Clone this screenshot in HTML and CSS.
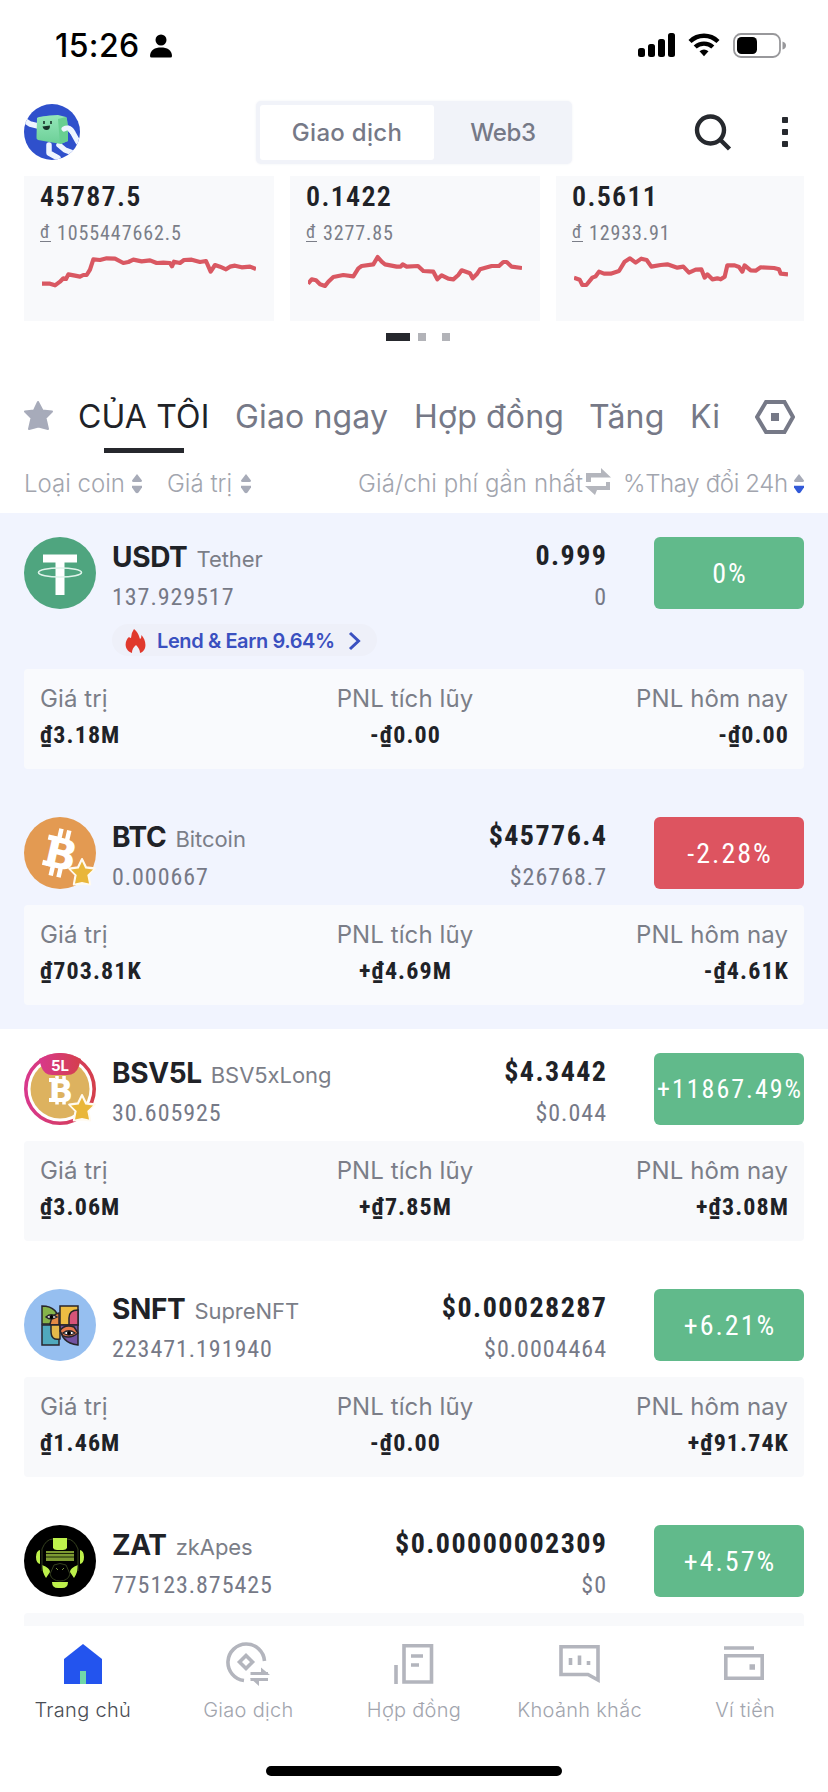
FILE: index.html
```html
<!DOCTYPE html>
<html lang="vi">
<head>
<meta charset="utf-8">
<title>Giao dịch</title>
<link rel="stylesheet" href="styles.css">
</head>
<body>
<svg class="defs" width="0" height="0">
  <defs>
    <symbol id="sort" viewBox="0 0 12 22">
      <path class="sort-up" d="M6 1 11 7.4Q11 9 9.500 9H2.500Q1 9 1 7.400Z"/>
      <path class="sort-down" d="M1 12.800H11V14.500L7.500 19.600Q6 21 4.500 19.600L1 14.500Z"/>
    </symbol>
    <symbol id="fav" viewBox="0 0 28 30">
      <path d="M14 2 18 10.200 26.800 11.300 20.400 17.600 22.200 27.500 14 26.500 5.800 27.500 7.500 18 1.200 11.500 10 10.200Z" fill="#fffaf0" stroke="#fffaf0" stroke-width="2" stroke-linejoin="round"/>
      <path d="M14 4.500 17.300 11.600 25 12.500 19.300 18 21 26.500 14 25 7 26.500 8.700 18 3 12.500 10.700 11.600Z" fill="#e9b63a"/>
    </symbol>
  </defs>
</svg>
<div class="screen">
  <div class="status">
    <span class="time">15:26</span>
    <svg class="person" width="22" height="24" viewBox="0 0 22 24"><circle cx="11" cy="6" r="5.500"/><path d="M0 22C0 16 5 13.500 11 13.500S22 16 22 22Q22 23.500 20.500 23.500H1.500Q0 23.500 0 22Z"/></svg>
    <div class="status-icons">
      <svg width="37" height="24" viewBox="0 0 37 24"><rect x="0" y="15" width="7" height="9" rx="2.500"/><rect x="10" y="11" width="7" height="13" rx="2.500"/><rect x="20" y="6" width="7" height="18" rx="2.500"/><rect x="30" y="0" width="7" height="24" rx="2.500"/></svg>
      <svg class="wifi" width="32" height="24" viewBox="0 0 32 24"><g fill="none" stroke="#000" stroke-width="4.400"><path d="M2 8.500C10 .8 22 .8 30 8.500"/><path d="M7.200 14C12 9.500 20 9.500 24.800 14"/></g><path d="M11.500 18.300Q16 14.800 20.500 18.300L16 23.300Z"/></svg>
      <svg class="battery" width="53" height="25" viewBox="0 0 53 25"><rect x="1" y="1" width="46" height="23" rx="7" fill="none" stroke="#98989b" stroke-width="1.800"/><rect x="4" y="4" width="20" height="17" rx="4.500"/><path d="M49.500 8.500Q53 9.500 53 12.500T49.500 16.500Z" fill="#98989b"/></svg>
    </div>
  </div>

  <div class="topbar">
    <svg class="avatar" width="56" height="56" viewBox="0 0 56 56">
      <defs><clipPath id="av"><circle cx="28" cy="28" r="28"/></clipPath><linearGradient id="cube" x2="0" y2="1"><stop stop-color="#94e7b9"/><stop offset="1" stop-color="#6ccf97"/></linearGradient></defs>
      <g clip-path="url(#av)">
        <rect width="56" height="56" fill="#2f50cc"/>
        <g fill="none" stroke="#eef4ff" stroke-width="5.500" stroke-linecap="round" stroke-linejoin="round"><path d="M0 16 6 20 14 22"/><path d="M39 25Q46 22 49 29L54 38"/><path d="M25 41V49L34 54"/><path d="M35 41 41 46 49 49"/></g>
        <path d="M13 14Q15 12 34 11L42 13Q44 15 44 37L37 40 14 36Q12 35 12.500 33Z" fill="url(#cube)"/>
        <path d="M34 15 42 13Q44 15 44 37L36 40Z" fill="#68cf91"/>
        <path d="M40 25Q45 22 48 28" fill="none" stroke="#eef4ff" stroke-width="5" stroke-linecap="round"/>
        <path d="M20 17V20M27 17V20" stroke="#17332a" stroke-width="1.600"/><path d="M18.500 22.500 26 21.500Q26 26 22.500 26 19.500 26 18.500 22.500Z" fill="#17332a"/>
      </g>
    </svg>
    <div class="segment"><span class="seg seg-on">Giao dịch</span><span class="seg seg-off">Web3</span></div>
    <div class="top-actions">
      <svg width="38" height="38" viewBox="0 0 38 38" fill="none" stroke="#26292e" stroke-width="4.400"><circle cx="16.500" cy="16" r="13.500"/><path d="M26 25.500 35.500 35"/></svg>
      <svg class="more" width="6" height="32" viewBox="0 0 6 32" fill="#26292e"><rect y="1" width="6" height="6" rx=".8"/><rect y="13" width="6" height="6" rx=".8"/><rect y="25" width="6" height="6" rx=".8"/></svg>
    </div>
  </div>

  <div class="cards">
    <div class="card"><div class="card-value">45787.5</div><div class="card-sub"><span class="dong">đ</span>1055447662.5</div>
      <svg class="chart" width="214" height="40" viewBox="126 756 642 120"><path d="M126 848 150 848 165 853 180 842 190 832 198 834 205 820 225 824 240 827 250 822 260 822 270 806 280 775 300 777 320 772 345 773 370 786 385 783 400 776 425 781 450 778 470 786 490 785 510 786 516 796 522 782 540 786 552 777 575 776 600 783 618 780 632 812 645 792 660 797 678 805 690 797 705 794 725 799 750 797 768 804"/></svg></div>
    <div class="card"><div class="card-value">0.1422</div><div class="card-sub"><span class="dong">đ</span>3277.85</div>
      <svg class="chart" width="214" height="40" viewBox="924 756 642 120"><path d="M924 848 935 835 948 838 960 850 975 855 985 842 1000 828 1030 822 1060 826 1075 802 1085 795 1120 790 1133 768 1145 782 1155 790 1190 797 1202 797 1208 790 1220 797 1254 795 1270 810 1300 812 1312 835 1325 823 1345 833 1360 835 1375 822 1385 808 1410 817 1418 832 1430 820 1440 805 1475 795 1497 795 1510 783 1520 783 1535 797 1566 801"/></svg></div>
    <div class="card"><div class="card-value">0.5611</div><div class="card-sub"><span class="dong">đ</span>12933.91</div>
      <svg class="chart" width="214" height="40" viewBox="480 756 642 120"><path d="M480 830 497 836 505 852 517 852 535 830 545 826 555 812 570 818 590 818 615 810 632 782 648 772 665 785 682 773 698 777 712 797 740 792 760 790 790 800 808 797 825 815 845 806 862 805 872 830 880 820 895 835 910 832 920 835 932 827 940 793 962 793 975 798 985 812 992 793 1010 808 1025 809 1040 799 1080 801 1095 805 1100 818 1122 820"/></svg></div>
  </div>
  <div class="dots"><i class="dot dot-on"></i><i class="dot"></i><i class="dot dot-last"></i></div>

  <div class="tabs">
    <svg class="tab-star" width="30" height="31" viewBox="0 0 30 31"><path d="M14 2 18.500 10.500 28 11.500 21.500 18 24 29 14.500 26.500 5 29 7.500 18 1 11.500 10 10.500Z" fill="#a7abba" stroke="#a7abba" stroke-width="2" stroke-linejoin="round"/></svg>
    <span class="tab tab-on t-mine">CỦA TÔI</span><span class="tab t-spot">Giao ngay</span><span class="tab t-fut">Hợp đồng</span><span class="tab t-up">Tăng</span><span class="tab t-ki">Ki</span>
    <svg class="hex" width="40" height="34" viewBox="0 0 40 34"><path d="M11 2H29.500L38 17 29.500 32H11L2 17Z" fill="none" stroke="#767987" stroke-width="4"/><rect x="16" y="13" width="8" height="8" fill="#767987"/></svg>
  </div>

  <div class="cols">
    <span class="c-coin">Loại coin</span><svg class="sort" width="12" height="22"><use href="#sort"/></svg>
    <span class="c-value">Giá trị</span><svg class="sort" width="12" height="22"><use href="#sort"/></svg>
    <span class="c-price">Giá/chi phí gần nhất</span><svg class="swap" width="27" height="28" viewBox="0 0 27 28" fill="#b4b6bd"><path d="M1 14V5H16V0L26 9.500H6V14Z"/><path d="M25 14V22H12L10 27 0 18H21V14Z"/></svg>
    <span class="c-change">%Thay đổi 24h</span><svg class="sort sort-desc" width="12" height="22"><use href="#sort"/></svg>
  </div>

  <div class="list">
    <div class="row row-held">
      <div class="main">
        <svg class="coin" viewBox="0 0 72 72"><circle cx="36" cy="36" r="36" fill="#4fa57f"/><path d="M19 17.500H53V25.500H40.500V58H31.500V25.500H19Z" fill="#fff"/><ellipse cx="36" cy="35.500" rx="21.500" ry="4.500" fill="none" stroke="#dff3ea" stroke-width="1.600"/></svg>
        <div class="info"><div class="name"><b>USDT</b><span>Tether</span></div><div class="sub">137.929517</div></div>
        <div class="price"><b>0.999</b><span>0</span></div>
        <div class="badge up">0%</div>
      </div>
      <div class="promo">
        <svg width="22" height="26" viewBox="0 0 22 26"><path d="M9 1C13 4 14 8 15 11Q16.500 10 16.500 7C21 12 23 22 15 25Q15 21 11 17 7 20 7 25C-2 22 0 12 4 9Q5 10 6 10 6 5 9 1Z" fill="#e0392d"/></svg>
        <span>Lend &amp; Earn 9.64%</span>
        <svg class="chev" width="14" height="20" viewBox="0 0 14 20"><path d="M2 2 10.500 10 2 18" fill="none" stroke="#3a50c0" stroke-width="3"/></svg>
      </div>
      <div class="pnl"><div><span>Giá trị</span><b>₫3.18M</b></div><div><span>PNL tích lũy</span><b>-₫0.00</b></div><div><span>PNL hôm nay</span><b>-₫0.00</b></div></div>
    </div>

    <div class="row row-held">
      <div class="main">
        <svg class="coin" viewBox="0 0 72 72"><circle cx="36" cy="36" r="36" fill="#e39a52"/><g transform="rotate(13 36 36)"><path d="M32 12V22M40 12V22M32 50V60M40 50V60" stroke="#fff" stroke-width="4.500"/><path d="M21 23H30M21 49H30" stroke="#fff" stroke-width="5"/><text x="37.500" y="51.500" class="coin-b" font-size="42">B</text></g><use href="#fav" x="44" y="40" width="28" height="30"/></svg>
        <div class="info"><div class="name"><b>BTC</b><span>Bitcoin</span></div><div class="sub">0.000667</div></div>
        <div class="price"><b>$45776.4</b><span>$26768.7</span></div>
        <div class="badge down">-2.28%</div>
      </div>
      <div class="pnl"><div><span>Giá trị</span><b>₫703.81K</b></div><div><span>PNL tích lũy</span><b>+₫4.69M</b></div><div><span>PNL hôm nay</span><b>-₫4.61K</b></div></div>
    </div>

    <div class="row">
      <div class="main">
        <svg class="coin" viewBox="0 0 72 72"><defs><linearGradient id="ring"><stop stop-color="#d8388c"/><stop offset="1" stop-color="#d43f4c"/></linearGradient></defs><circle cx="36" cy="36" r="34.200" fill="#fff" stroke="url(#ring)" stroke-width="3.600"/><circle cx="36" cy="36" r="29.500" fill="#ddb25f"/><path d="M15 6Q36-6 57 6L55 13Q52 22 43 22H28Q20 22 17 13Z" fill="url(#ring)"/><path d="M33 23V28M40 23V28M33 46V51.500M40 46V51.500" stroke="#fff" stroke-width="3.500"/><path d="M25 27H31M25 47H31" stroke="#fff" stroke-width="4"/><text x="37" y="49" class="coin-b" font-size="32">B</text><text x="36" y="18" class="coin-tag" font-size="15">5L</text><use href="#fav" x="44" y="40" width="28" height="30"/></svg>
        <div class="info"><div class="name"><b>BSV5L</b><span>BSV5xLong</span></div><div class="sub">30.605925</div></div>
        <div class="price"><b>$4.3442</b><span>$0.044</span></div>
        <div class="badge up badge-long">+11867.49%</div>
      </div>
      <div class="pnl"><div><span>Giá trị</span><b>₫3.06M</b></div><div><span>PNL tích lũy</span><b>+₫7.85M</b></div><div><span>PNL hôm nay</span><b>+₫3.08M</b></div></div>
    </div>

    <div class="row">
      <div class="main">
        <svg class="coin" viewBox="0 0 72 72"><circle cx="36" cy="36" r="36" fill="#96bff0"/><g stroke="#28262c" stroke-width="1.500"><path d="M18 17Q35 17 35 35H18Z" fill="#86b34a"/><path d="M26 35Q28 25 35 24V36H26Z" fill="#e58a45"/><path d="M18 36H35V56H18Z" fill="#50a9bd"/><path d="M27 36H36V50Q27 52 27 42Z" fill="#e5b94a"/><path d="M36 17H54V36H36Z" fill="#edbd43"/><path d="M45 36V29Q45 21 54 21V36Z" fill="#d65479"/><path d="M36 36H54V56Q36 54 36 36Z" fill="#7353a2"/><path d="M36 42Q40 35 50 38L54 44Q47 50 39 47Z" fill="#e87a4d"/></g><g fill="#fff" stroke="#28262c" stroke-width="1.500"><path d="M22 28Q27 23.500 33 28 27 32 22 28ZM39 44Q45 39.500 51 44 45 48 39 44Z"/></g><circle cx="27.500" cy="28" r="2"/><circle cx="45" cy="44" r="2"/></svg>
        <div class="info"><div class="name"><b>SNFT</b><span>SupreNFT</span></div><div class="sub">223471.191940</div></div>
        <div class="price"><b>$0.00028287</b><span>$0.0004464</span></div>
        <div class="badge up">+6.21%</div>
      </div>
      <div class="pnl"><div><span>Giá trị</span><b>₫1.46M</b></div><div><span>PNL tích lũy</span><b>-₫0.00</b></div><div><span>PNL hôm nay</span><b>+₫91.74K</b></div></div>
    </div>

    <div class="row">
      <div class="main">
        <svg class="coin" viewBox="0 0 72 72"><circle cx="36" cy="36" r="36"/><g fill="#bdf04b"><path d="M29 13H43V23Q42 25 39 25H33Q30 25 29 23Z"/><path d="M16 25V39Q12 38 12 32T16 25ZM56 25V39Q60 38 60 32T56 25Z"/><path d="M18 40Q26 43 26 47L22 53Q18 47 18 40ZM54 40Q46 43 46 47L50 53Q54 47 54 40Z"/><path d="M28 57H44Q44 63 38 63H34Q28 63 28 57Z"/></g><path d="M22 26H50V36H22Z" fill="#7d9a32"/><path d="M22 28.500H50M22 32H50" stroke="#1b2408" stroke-width="1.200"/><path d="M18 46V24Q22 14 29 14M54 46V24Q50 14 43 14M30 40Q36 37 42 40L46 49Q44 56 36 56T26 49Z" fill="none" stroke="#35401e"/><path d="M32 43 34 45M40 43 38 45" stroke="#7b9440"/></svg>
        <div class="info"><div class="name"><b>ZAT</b><span>zkApes</span></div><div class="sub">775123.875425</div></div>
        <div class="price"><b>$0.00000002309</b><span>$0</span></div>
        <div class="badge up">+4.57%</div>
      </div>
      <div class="pnl"></div>
    </div>
  </div>

  <div class="nav">
    <div class="nav-item nav-on"><svg width="50" height="46" viewBox="0 0 50 46"><path d="M25 2 44 17V42H6V17Z" fill="#2354ee"/><path d="M22 29H28V42H22Z" fill="#71d7a8"/></svg><span>Trang chủ</span></div>
    <div class="nav-item"><svg width="50" height="46" viewBox="0 0 50 46" fill="none" stroke="#b3b5bd" stroke-width="3.600"><path d="M21 38.500A18.300 18.300 0 1 1 41.500 19"/><path d="M23 13.500 29.500 20 23 26.500 16.500 20Z"/><path d="M27.500 31.500H45" stroke-width="3"/><path d="M27.500 37.500H45" stroke-width="3"/><path d="M38 25.500 47 33H38ZM27 36H36V44Z" fill="#b3b5bd" stroke="none"/></svg><span>Giao dịch</span></div>
    <div class="nav-item"><svg width="50" height="46" viewBox="0 0 50 46" fill="none" stroke="#b3b5bd" stroke-width="3.600"><path d="M7 23V42M15 3.800H42.500V40H15Z"/><path d="M22 14H34M22 23H30" stroke-width="3.400"/></svg><span>Hợp đồng</span></div>
    <div class="nav-item"><svg width="50" height="46" viewBox="0 0 50 46" fill="none" stroke="#b3b5bd" stroke-width="3.600"><path d="M6 4.800H43V38L33 32.500H6Z"/><path d="M15.500 16V23M24.500 13.500V23M33.500 19V23"/></svg><span>Khoảnh khắc</span></div>
    <div class="nav-item"><svg width="50" height="46" viewBox="0 0 50 46" fill="none" stroke="#b3b5bd" stroke-width="3.600"><path d="M4 6H34M5.800 13.800H42.200V36.200H5.800Z"/><path d="M29.500 25H35" stroke-width="5.500"/></svg><span>Ví tiền</span></div>
  </div>
  <div class="home-bar"></div>
</div>
</body>
</html>
```
FILE: styles.css
```css
* { box-sizing: border-box; }
body { margin: 0; background: #fff; }
svg { display: block; flex: none; }
.defs { position: absolute; }
.screen { width: 828px; height: 1792px; overflow: hidden; display: flex; flex-direction: column; background: #fff; font-family: Inter, "Noto Sans", sans-serif; color: #202227; white-space: nowrap; }
.status { height: 88px; flex: none; display: flex; padding: 26px 42px 0 55px; }
.time { width: 95px; font-size: 32px; line-height: 40px; font-weight: 500; color: #000; letter-spacing: .4px; }
.person { margin-top: 8px; }
.status-icons { display: flex; margin-left: auto; padding-top: 7px; }
.wifi { margin-left: 13px; }
.battery { margin-left: 13px; }
.topbar { height: 88px; flex: none; display: flex; padding: 13px 40px 0 24px; }
.avatar { margin-top: 3px; }
.segment { width: 316px; height: 63px; margin-left: 176px; padding: 4px; display: flex; background: #f1f3f9; border-radius: 5px; box-shadow: 0 0 3px #f1f2f6; }
.seg { line-height: 55px; text-align: center; font-size: 24px; font-weight: 500; color: #767987; }
.seg-on { flex: 0 0 174px; background: #fff; border-radius: 3px; letter-spacing: .3px; }
.seg-off { flex: 0 0 138px; letter-spacing: -.3px; }
.top-actions { margin-left: auto; display: flex; gap: 50px; padding-top: 13px; }
.more { margin-top: 2px; }
.cards { height: 145px; flex: none; margin: 0 24px; display: flex; gap: 16px; overflow: hidden; }
.card { flex: 0 0 250px; padding: 4px 0 0 16px; background: #f8f9fb; }
.card-value { font: 600 28px/34px Roboto, sans-serif; font-stretch: 85%; letter-spacing: 1.300px; }
.card-sub { display: flex; font: 400 20px/28px Roboto, sans-serif; font-stretch: 85%; letter-spacing: .9px; color: #7b7e88; margin-top: 5px; }
.dong { width: 11px; height: 19px; margin: 4px 6px 0 0; border-bottom: 1.500px solid #7b7e88; font-size: 18px; line-height: 17px; }
.chart { margin: 6px 0 0 2px; }
.chart path { fill: none; stroke: #d95862; stroke-width: 12.500; stroke-linejoin: round; }
.dots { height: 65px; flex: none; display: flex; padding: 12px 0 0 386px; gap: 8px; }
.dot { width: 8px; height: 8px; background: #b2b3b8; }
.dot-on { width: 24px; background: #26282d; }
.dot-last { margin-left: 8px; }
.tabs { height: 68px; flex: none; display: flex; padding: 9px 33px 0 24px; }
.tab-star { margin-top: 5px; }
.tab { height: 58px; font-size: 32px; line-height: 44px; color: #767987; letter-spacing: .15px; }
.tab-on { color: #202227; position: relative; }
.tab-on::after { content: ""; position: absolute; left: 26px; bottom: 0; width: 80px; height: 5px; background: #26282d; }
.t-mine { width: 157px; margin-left: 24px; }
.t-spot { width: 179px; }
.t-fut { width: 175px; }
.t-up { width: 101px; }
.hex { margin: 5px 0 0 auto; }
.cols { height: 59px; flex: none; display: flex; padding: 12px 23px 0 24px; font-size: 24px; line-height: 36px; font-weight: 300; color: #a2a5ae; }
.sort { margin-top: 7px; fill: #a7abb8; }
.sort-desc { --down: #3159d8; margin-left: auto; }
.sort-down { fill: var(--down, #a7abb8); }
.c-coin { width: 107px; }
.c-value { width: 73px; margin-left: 24px; }
.c-price { width: 227px; margin-left: 106px; letter-spacing: .1px; }
.swap { margin-top: 2px; }
.c-change { width: 164px; margin-left: 11px; letter-spacing: -.35px; }
.list { height: 1113px; flex: none; overflow: hidden; }
.row { padding: 24px; }
.row-held { background: #f1f4fe; }
.main { height: 72px; display: flex; }
.coin { width: 72px; height: 72px; }
.coin-b { font-family: "DejaVu Sans", sans-serif; font-weight: 700; fill: #fff; text-anchor: middle; }
.coin-tag { font-family: Inter, sans-serif; font-weight: 700; fill: #fff; text-anchor: middle; }
.info { margin-left: 16px; padding-top: 4px; }
.name { height: 32px; display: flex; align-items: baseline; gap: 9px; line-height: 32px; }
.name b { font-size: 28px; font-weight: 700; letter-spacing: -.35px; }
.name span { font-size: 22px; letter-spacing: -.05px; color: #7b7e88; }
.sub { margin-top: 8px; font: 400 24px/32px Roboto, sans-serif; font-stretch: 85%; letter-spacing: .95px; color: #767987; }
.price { margin-left: auto; padding-top: 3px; display: flex; flex-direction: column; align-items: flex-end; font-family: Roboto, sans-serif; font-stretch: 85%; }
.price b { font-size: 28px; line-height: 32px; font-weight: 700; letter-spacing: 1.450px; margin-right: -1.450px; }
.price span { margin-top: 9px; font-size: 24px; line-height: 32px; letter-spacing: 1px; margin-right: -1px; color: #767987; }
.badge { width: 150px; height: 72px; margin-left: 48px; border-radius: 6px; font: 400 28px/73px Roboto, sans-serif; font-stretch: 85%; letter-spacing: 2px; text-indent: 2px; text-align: center; color: #fff; }
.badge-long { font-size: 26px; }
.up { background: #61ba8b; }
.down { background: #dd5460; }
.promo { width: 265px; height: 32px; margin: 15px 0 13px 88px; padding: 1px 0 0 13px; display: flex; align-items: center; border-radius: 16px; background: #eef0f9; color: #3a50c0; font-size: 20px; font-weight: 600; letter-spacing: -.4px; }
.promo span { margin-left: 10px; width: 191px; }
.pnl { height: 100px; margin-top: 16px; padding: 12px 16px 0; display: grid; grid-template-columns: 266px 198px 1fr; background: #f8f9fb; border-radius: 4px; }
.promo + .pnl { margin-top: 0; }
.row-held .pnl { background: #f9fafd; }
.pnl div { display: flex; flex-direction: column; }
.pnl div:nth-child(2) { align-items: center; }
.pnl div:nth-child(3) { align-items: flex-end; }
.pnl span { font-size: 24px; line-height: 36px; letter-spacing: .1px; color: #7b7e88; }
.pnl b { font: 700 24px/36px Roboto, sans-serif; font-stretch: 85%; letter-spacing: 1.100px; margin-right: -1px; }
.nav { height: 140px; flex: none; display: grid; grid-template-columns: repeat(5, 1fr); background: #fff; }
.nav-item { display: flex; flex-direction: column; align-items: center; padding-top: 16px; font-size: 20px; line-height: 28px; font-weight: 300; letter-spacing: .3px; color: #a2a5ae; }
.nav-item span { margin-top: 8px; }
.nav-on { color: #4a4d55; }
.home-bar { width: 296px; height: 10px; flex: none; margin: 0 auto; border-radius: 5px; background: #000; }
```
